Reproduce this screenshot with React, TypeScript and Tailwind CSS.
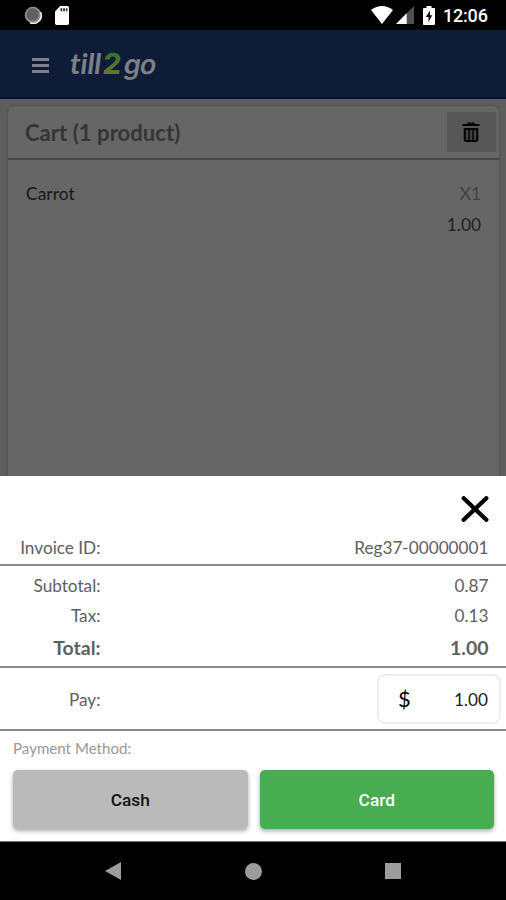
import React from 'react';

interface SummaryRowProps {
  label: string;
  value: string;
  className?: string;
}

const StatusBar: React.FC = () => {
  return (
    <div className="h-[30px] shrink-0 bg-black flex items-center justify-between pl-6 pr-[18px]">
      <div className="flex items-center">
        <svg className="w-[18px] h-[18px]" viewBox="0 0 18 18">
          <circle cx="9" cy="9" r="8.3" fill="#8f8f8f" />
          <path d="M16.5 6A8 8 0 0 1 6 16.7" fill="none" stroke="#eeeeee" strokeWidth="1.6" />
          <circle cx="8.7" cy="8.5" r="6.3" fill="#606060" />
        </svg>
        <svg className="w-[14px] h-[19px] ml-[13px]" viewBox="0 0 14 19">
          <path d="M5.2 0H12.3Q14 0 14 1.7V17.3Q14 19 12.3 19H1.7Q0 19 0 17.3V5.5Z" fill="white" />
          <path d="M5.5 2.3h1.7v3H5.5zM8.2 2.3h1.7v3H8.2zM10.9 2.3h1.5v3h-1.5z" fill="#222222" />
        </svg>
      </div>
      <div className="flex items-center">
        <svg className="w-[22px] h-[18px]" viewBox="0 0 22 18">
          <path d="M0 4Q11-4 22 4L11 18Z" fill="white" />
        </svg>
        <svg className="w-[18px] h-[18px] ml-[3px]" viewBox="0 0 18 18">
          <path d="M0 18L18 0V18Z" fill="#505050" />
          <path d="M0 18L10.7 7.3V18Z" fill="white" />
        </svg>
        <svg className="w-[12px] h-[19px] ml-[9px]" viewBox="0 0 12 19">
          <path d="M3.5 0h5v2H11q1 0 1 1v15q0 1-1 1H1q-1 0-1-1V3q0-1 1-1h2.5Z" fill="white" />
          <path d="M7 4.5L2.8 11H5.5V16L9.3 9.3H7Z" fill="#111111" />
        </svg>
        <span className="ml-[8px] w-[45px] whitespace-nowrap font-['Roboto',sans-serif] text-[18px] leading-5 font-medium text-white tracking-[-0.2px] mt-[2px]">12:06</span>
      </div>
    </div>
  );
};

const Header: React.FC = () => {
  return (
    <header className="h-[69px] shrink-0 bg-[#0e1c38] border-b-2 border-[#071335] flex items-center pl-8">
      <button className="w-[17px] flex flex-col gap-[3px] mt-[3px]" aria-label="Menu">
        <span className="h-[3px] bg-[#7c8187]" />
        <span className="h-[3px] bg-[#7c8187]" />
        <span className="h-[3px] bg-[#7c8187]" />
      </button>
      <div className="ml-[21px] flex items-baseline font-bold text-[#7d8187] text-[29px] leading-8">
        <span className="italic tracking-[-0.1px]">till</span>
        <span className="ml-[2px] w-[20px] text-[29px] font-['Inter',sans-serif] font-extrabold -skew-x-6 bg-linear-to-b from-[#246d2b] to-[#71792a] bg-clip-text text-transparent">2</span>
        <span className="ml-px font-['Inter',sans-serif] font-semibold text-[27px] tracking-[-0.8px] -skew-x-10">go</span>
      </div>
    </header>
  );
};

const Cart: React.FC = () => {
  return (
    <main className="h-[377px] shrink-0 bg-[#5e5e5e] pt-[7px] pl-2 pr-[7px] overflow-hidden">
      <section className="h-full bg-[#666666] rounded-t-md shadow-[0_0_3px_#484848]">
        <div className="h-[54px] border-b-2 border-[#484848] flex items-center justify-between pl-[17px] pr-[3px]">
          <h1 className="text-[22px] tracking-[0.06px] font-bold text-[#353535]">Cart (1 product)</h1>
          <button className="w-[49px] h-[40px] bg-[#565656] rounded-xs flex items-center justify-center" aria-label="Empty cart">
            <svg className="w-[18px] h-[20px] mr-px" viewBox="0 0 18 20" fill="none" stroke="black">
              <path d="M0.5 3H17.5M5.5 1.5H12.5" strokeWidth="2.2" />
              <path d="M2.7 7H15.3V17Q15.3 19 13.3 19H4.7Q2.7 19 2.7 17Z" fill="#404040" strokeWidth="2" />
              <path d="M7 7V18M11 7V18" strokeWidth="1.4" />
            </svg>
          </button>
        </div>
        <div className="pt-[18px] pl-[18px] pr-[18px] text-[17.3px]">
          <div className="h-[31px] flex items-center justify-between">
            <span className="text-[#171717] tracking-[0.1px]">Carrot</span>
            <span className="text-[#434343]">X1</span>
          </div>
          <div className="h-[31px] flex items-center justify-end text-[#202020]">1.00</div>
        </div>
      </section>
    </main>
  );
};

const SummaryRow: React.FC<SummaryRowProps> = ({ label, value, className = '' }) => {
  return (
    <div className={`flex items-center justify-between pr-[17.5px] ${className}`}>
      <span className="w-[100.5px] text-right">{label}</span>
      <span>{value}</span>
    </div>
  );
};

const PaymentSheet: React.FC = () => {
  return (
    <section className="h-[366px] shrink-0 bg-white border-b border-[#777777] text-[#606060] text-[17.2px]">
      <div className="h-[90px] border-b-2 border-[#898989]">
        <div className="h-[56px] flex items-end justify-end pr-[17px] pb-[10px]">
          <button aria-label="Close">
            <svg className="w-[28px] h-[26px]" viewBox="0 0 28 26" fill="none" stroke="black" strokeWidth="4.3" strokeLinecap="round">
              <path d="M2.7 2.2L25.3 23.8M25.3 2.2L2.7 23.8" />
            </svg>
          </button>
        </div>
        <SummaryRow label="Invoice ID:" value="Reg37-00000001" className="h-[32px]" />
      </div>

      <div className="h-[102px] border-b-2 border-[#898989] pt-[5px]">
        <SummaryRow label="Subtotal:" value="0.87" className="h-[30px]" />
        <SummaryRow label="Tax:" value="0.13" className="h-[30px]" />
        <SummaryRow label="Total:" value="1.00" className="h-[34px] text-[19.5px] font-bold" />
      </div>

      <div className="h-[63px] border-b-2 border-[#898989] flex items-center justify-between pr-[5px]">
        <span className="w-[100.5px] text-right pt-[3px]">Pay:</span>
        <div className="w-[124px] h-[50px] mt-px border-2 border-[#eeeeee] rounded-lg flex items-center justify-between pl-[19px] pr-[11px] text-[#202020]">
          <span className="text-[22px] leading-6 text-black">$</span>
          <span className="pt-[2px]">1.00</span>
        </div>
      </div>

      <div className="pl-[13px] pr-[12px] pt-[6px]">
        <p className="text-[15.1px] leading-[22px] text-[#999999]">Payment Method:</p>
        <div className="mt-[11px] grid grid-cols-2 gap-3 font-['Roboto',sans-serif] text-[17.3px] font-medium">
          <button className="h-[59px] pt-[2px] bg-[#bababa] rounded-[5px] text-[#111111] shadow-[0_2px_4px_rgba(0,0,0,0.35)]">Cash</button>
          <button className="h-[59px] pt-[2px] bg-[#47ad50] rounded-[5px] text-white shadow-[0_2px_4px_rgba(0,0,0,0.35)]">Card</button>
        </div>
      </div>
    </section>
  );
};

const NavigationBar: React.FC = () => {
  return (
    <nav className="h-[58px] shrink-0 bg-black grid grid-cols-[105px_16px_124px_17px_123px_16px] items-center text-[#9c9c9c]">
      <svg className="col-start-2 w-4 h-[18px]" viewBox="0 0 16 18" fill="currentColor">
        <path d="M0 9L16 0V18Z" />
      </svg>
      <span className="col-start-4 size-[17px] rounded-full bg-[#9c9c9c]" />
      <span className="col-start-6 size-4 bg-[#9c9c9c]" />
    </nav>
  );
};

export default function App() {
  return (
    <div className="w-[506px] h-[900px] flex flex-col overflow-hidden font-['Lato',sans-serif]">
      <StatusBar />
      <Header />
      <Cart />
      <PaymentSheet />
      <NavigationBar />
    </div>
  );
}
